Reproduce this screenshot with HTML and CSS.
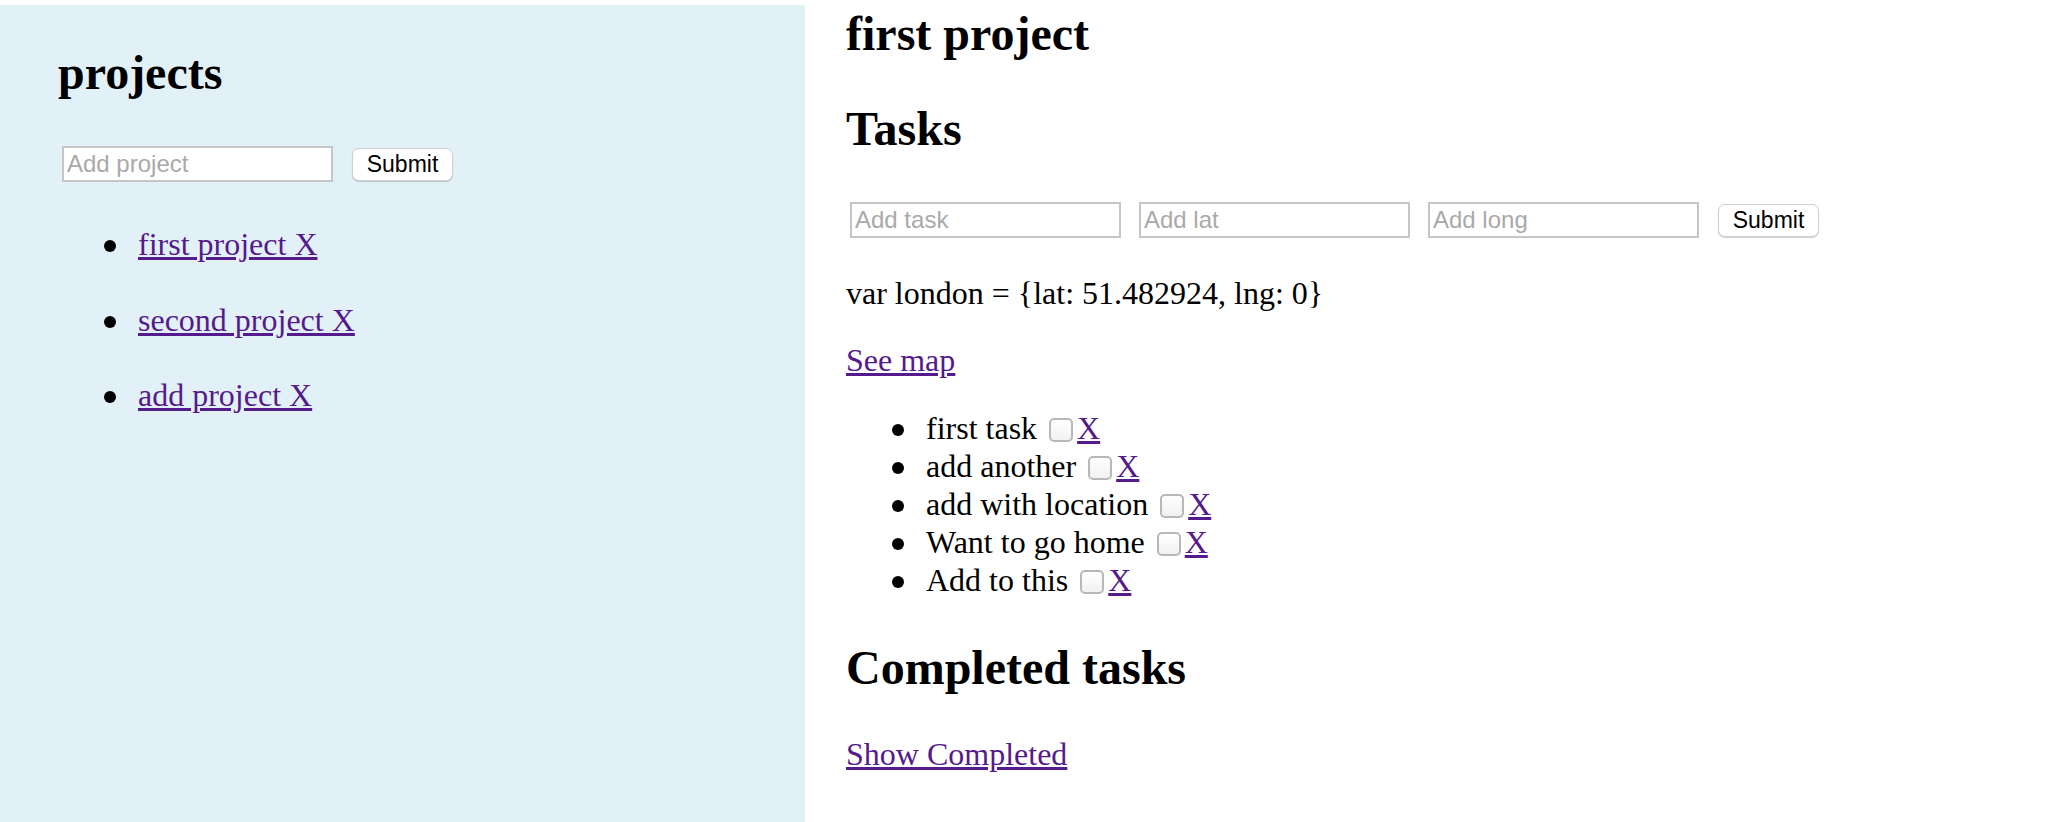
FILE: index.html
```html
<!DOCTYPE html>
<html>
<head>
<meta charset="utf-8">
<title>Projects</title>
<link rel="stylesheet" href="styles.css">
</head>
<body>
<div class="page">
  <aside class="sidebar">
    <h2 class="heading">projects</h2>
    <form class="form-row form-row--project">
      <input class="field" type="text" placeholder="Add project">
      <button class="btn" type="button">Submit</button>
    </form>
    <ul class="project-list">
      <li><a class="link" href="#">first project X</a></li>
      <li><a class="link" href="#">second project X</a></li>
      <li><a class="link" href="#">add project X</a></li>
    </ul>
  </aside>
  <main class="content">
    <h2 class="heading">first project</h2>
    <h2 class="heading heading--tasks">Tasks</h2>
    <form class="form-row form-row--task">
      <input class="field" type="text" placeholder="Add task">
      <input class="field" type="text" placeholder="Add lat">
      <input class="field" type="text" placeholder="Add long">
      <button class="btn" type="button">Submit</button>
    </form>
    <p class="line line--coords">var london = {lat: 51.482924, lng: 0}</p>
    <p class="line line--map"><a class="link" href="#">See map</a></p>
    <ul class="task-list">
      <li>first task <input class="check" type="checkbox"><a class="link" href="#">X</a></li>
      <li>add another <input class="check" type="checkbox"><a class="link" href="#">X</a></li>
      <li>add with location <input class="check" type="checkbox"><a class="link" href="#">X</a></li>
      <li>Want to go home <input class="check" type="checkbox"><a class="link" href="#">X</a></li>
      <li>Add to this <input class="check" type="checkbox"><a class="link" href="#">X</a></li>
    </ul>
    <h2 class="heading heading--completed">Completed tasks</h2>
    <p class="line line--show"><a class="link" href="#">Show Completed</a></p>
  </main>
</div>
</body>
</html>
```

FILE: styles.css
```css
html, body {
  margin: 0;
  padding: 0;
  height: 100%;
  background: #ffffff;
}

body {
  font-family: "Liberation Serif", "Times New Roman", serif;
  font-size: 32px;
  line-height: 38px;
  color: #000000;
}

.page {
  display: flex;
  height: 100vh;
  overflow: hidden;
}

.sidebar {
  width: 805px;
  flex: 0 0 805px;
  margin-top: 5px;
  padding: 40px 0 0 58px;
  box-sizing: border-box;
  background: #e2f1f7;
}

.content {
  flex: 1;
  padding: 6px 0 0 41px;
}

.heading {
  margin: 0;
  font-size: 48px;
  line-height: 56px;
  font-weight: bold;
}

.heading--tasks {
  margin-top: 39px;
}

.heading--completed {
  margin-top: 41px;
}

.form-row {
  display: flex;
  align-items: center;
  gap: 18px;
  margin: 0;
  padding-left: 4px;
}

.form-row--project {
  margin-top: 45px;
}

.form-row--task {
  margin-top: 45px;
}

.field {
  box-sizing: border-box;
  width: 271px;
  height: 36px;
  margin: 0;
  padding: 0 3px;
  border: 2px solid #c6c6c6;
  border-radius: 0;
  background: #ffffff;
  font-family: "Liberation Sans", Arial, sans-serif;
  font-size: 24px;
  color: #000000;
  outline: none;
}

.field::placeholder {
  color: #a9a9a9;
}

.btn {
  box-sizing: border-box;
  width: 101px;
  height: 33px;
  margin: 0 0 0 1px;
  padding: 0;
  border: 1px solid #cfcfcf;
  border-radius: 7px;
  background: #ffffff;
  box-shadow: 0 1px 1px rgba(0, 0, 0, 0.18);
  font-family: "Liberation Sans", Arial, sans-serif;
  font-size: 23px;
  color: #000000;
}

.link {
  color: #551a8b;
  text-decoration: underline;
}

.project-list,
.task-list {
  list-style: none;
  padding-left: 80px;
}

.project-list li::before,
.task-list li::before {
  content: "";
  display: inline-block;
  width: 12px;
  height: 12px;
  margin: 0 22px 0 -34px;
  border-radius: 50%;
  background: #000000;
  vertical-align: 3px;
}

.project-list {
  margin: 43px 0 0 0;
}

.project-list li + li {
  margin-top: 37.5px;
}

.line {
  margin: 0;
}

.line--coords {
  margin-top: 36px;
}

.line--map {
  margin-top: 29px;
}

.line--show {
  margin-top: 39px;
}

.task-list {
  margin: 30px 0 0 0;
}

.check {
  -webkit-appearance: none;
  appearance: none;
  box-sizing: border-box;
  display: inline-block;
  width: 24px;
  height: 24px;
  margin: 0 4px 0 4px;
  border: 2px solid #b8b8b8;
  border-radius: 5px;
  background: linear-gradient(#ffffff, #f1f1f1);
  vertical-align: -3px;
}
```
